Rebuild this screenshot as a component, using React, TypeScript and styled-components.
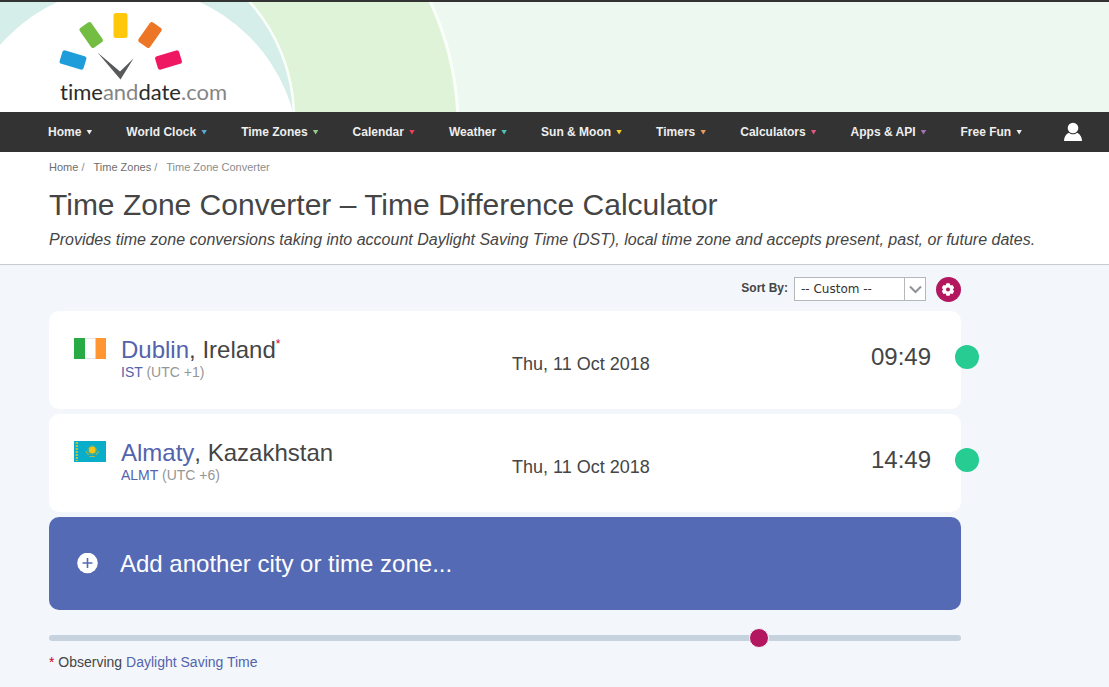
import React from "react";
import styled, { createGlobalStyle } from "styled-components";

const GlobalStyle = createGlobalStyle`
  *, *::before, *::after { box-sizing: border-box; }
  html { min-height: 100%; background: #f3f7fb; }
  body {
    margin: 0;
    font-family: "Liberation Sans", Arial, sans-serif;
    color: #454545;
  }
  a { color: #5363ac; text-decoration: none; }
`;

const Banner = styled.header`
  display: flex;
  height: 112px;
  overflow: hidden;
  border-top: 2px solid #333;
  background: #edf8f0;
`;

const LogoLink = styled.a`
  display: block;
  flex: none;
`;

const Nav = styled.nav`
  display: flex;
  align-items: center;
  height: 40px;
  padding: 0 26px 0 48px;
  background: #333;
`;

const NavList = styled.ul`
  display: flex;
  gap: 34px;
  margin: 0;
  padding: 0;
  list-style: none;
`;

const NavLink = styled.a<{ $arrow: string }>`
  display: flex;
  align-items: center;
  gap: 5px;
  font-size: 12px;
  line-height: 16px;
  font-weight: 700;
  white-space: nowrap;
  color: #eee;

  &::after {
    content: "";
    width: 6px;
    height: 5px;
    background: ${(p) => p.$arrow};
    clip-path: polygon(0 0, 100% 0, 50% 100%);
  }
`;

const UserButton = styled.button`
  display: flex;
  margin: 0 0 0 auto;
  padding: 0;
  border: 0;
  background: none;
`;

const Intro = styled.section`
  padding: 8px 49px 14px;
  border-bottom: 1px solid #c8cacc;
  background: #fff;
`;

const Crumbs = styled.ol`
  display: flex;
  gap: 9px;
  margin: 0;
  padding: 0;
  list-style: none;
  font-size: 11px;
  line-height: 14px;
  color: #8c8c8c;

  a { color: #6e6e6e; }
`;

const Title = styled.h1`
  margin: 13px 0 6px;
  font-size: 30px;
  line-height: 36px;
  font-weight: 400;
`;

const Lead = styled.p`
  margin: 0;
  font-size: 16px;
  line-height: 21px;
  font-style: italic;
`;

const Converter = styled.main`
  max-width: 1010px;
  padding: 12px 49px;
`;

const Tools = styled.div`
  display: flex;
  align-items: flex-start;
  justify-content: flex-end;
  height: 25px;
  margin-bottom: 9px;
`;

const SortLabel = styled.label`
  margin: 3px 6px 0 0;
  font-size: 12px;
  line-height: 16px;
  font-weight: 700;
`;

const SelectBox = styled.div`
  display: grid;
  grid-template-columns: 1fr 21px;
  width: 132px;
  height: 24px;
  margin-right: 10px;
  border: 1px solid #b4b8bb;
  background: #fff;

  select {
    grid-area: 1 / 1 / 2 / 3;
    width: 100%;
    padding: 0 6px;
    border: 0;
    appearance: none;
    background: none;
    font: 12px "DejaVu Sans", Verdana, sans-serif;
    color: #333;
  }

  svg {
    grid-area: 1 / 2;
    width: 21px;
    height: 22px;
    border-left: 1px solid #b4b8bb;
    pointer-events: none;
  }
`;

const GearButton = styled.button`
  display: flex;
  padding: 0;
  border: 0;
  border-radius: 50%;
  background: #b3175f;
`;

const Rows = styled.ul`
  display: grid;
  gap: 5px;
  margin: 0;
  padding: 0;
  list-style: none;
`;

const Row = styled.li`
  position: relative;
  display: grid;
  grid-template-columns: 47px 391px 1fr auto;
  height: 98px;
  padding: 25px 30px 0 25px;
  border-radius: 10px;
  background: #fff;
`;

const Flag = styled.svg`
  width: 32px;
  height: 21px;
  margin-top: 2px;
`;

const City = styled.h2`
  display: flex;
  margin: 0;
  font-size: 24px;
  line-height: 28px;
  font-weight: 400;
  white-space: pre;
`;

const Star = styled.span`
  font-size: 12px;
  line-height: 16px;
  color: #d0021b;
`;

const Zone = styled.p`
  margin: 0;
  font-size: 14px;
  line-height: 16px;
  color: #969696;
`;

const DateText = styled.span`
  margin-top: 17px;
  font-size: 18px;
  line-height: 22px;
`;

const Time = styled.time`
  margin-top: 7px;
  font-size: 24px;
  line-height: 28px;
`;

const Status = styled.span`
  position: absolute;
  top: 34px;
  right: -18px;
  width: 24px;
  height: 24px;
  border-radius: 50%;
  background: #27cc92;
`;

const AddButton = styled.button`
  display: flex;
  align-items: center;
  gap: 21px;
  width: 100%;
  height: 93px;
  margin: 5px 0 17px;
  padding: 0 28px;
  border: 0;
  border-radius: 10px;
  background: #556ab4;
  font: 24px/28px "Liberation Sans", Arial, sans-serif;
  color: #fff;
`;

const TimeSlider = styled.input`
  display: block;
  width: 100%;
  height: 22px;
  margin: 0;
  appearance: none;
  background: none;

  &::-webkit-slider-runnable-track {
    height: 6px;
    border-radius: 3px;
    background: #c6d2de;
  }
  &::-webkit-slider-thumb {
    width: 20px;
    height: 20px;
    margin-top: -7px;
    appearance: none;
    border: 1px solid #f3f7fb;
    border-radius: 50%;
    background: #b3175f;
  }
`;

const Note = styled.p`
  margin: 4px 0 0;
  font-size: 14px;
  line-height: 18px;

  span { color: #d0021b; }
`;

const menu = [
  ["Home", "#eee"],
  ["World Clock", "#5ba9d6"],
  ["Time Zones", "#8fce86"],
  ["Calendar", "#ee3d56"],
  ["Weather", "#4fc3b5"],
  ["Sun & Moon", "#f8d12f"],
  ["Timers", "#ee9a58"],
  ["Calculators", "#e0567c"],
  ["Apps & API", "#a971bd"],
  ["Free Fun", "#eee"],
];

const IrishFlag = () => (
  <Flag viewBox="0 0 32 21" aria-hidden="true">
    <path fill="#fff" stroke="#e4e4e4" d="M.5.5h31v20H.5z" />
    <path fill="#28ab45" d="M0 0h11v21H0z" />
    <path fill="#ff9632" d="M21.500 0H32v21H21.500z" />
  </Flag>
);

const KazakhFlag = () => (
  <Flag viewBox="0 0 32 21" aria-hidden="true">
    <path fill="#08aec9" d="M0 0h32v21H0z" />
    <path stroke="#b9c443" strokeWidth="2.200" strokeDasharray="2 1" d="M2.800 1v19" />
    <circle cx="18.300" cy="9" r="3.400" fill="#f5c414" />
    <circle cx="18.300" cy="9" r="4.300" fill="none" stroke="#a5b94d" strokeDasharray="1 1" />
    <path
      fill="none"
      stroke="#a9b84e"
      strokeWidth="1.200"
      d="M12 10c.5 2.500 1.500 3 2.800 3.600M24.600 10c-.5 2.500-1.500 3-2.800 3.600M15.500 15.500h5.600"
    />
  </Flag>
);

const places = [
  { city: "Dublin", country: "Ireland", dst: true, zone: "IST", offset: "(UTC +1)", time: "09:49", flag: <IrishFlag /> },
  { city: "Almaty", country: "Kazakhstan", dst: false, zone: "ALMT", offset: "(UTC +6)", time: "14:49", flag: <KazakhFlag /> },
];

const LogoText = styled.text`
  font: 22px Lato, sans-serif;
  font-variant-ligatures: none;
  fill: #2b2b2b;

  tspan { fill: #858585; }
`;

const Logo = () => (
  <svg width="480" height="110" viewBox="0 2 480 110" role="img" aria-label="timeanddate.com">
    <circle cx="161" cy="127" r="297" fill="#def3d8" stroke="#fafffa" strokeWidth="3" />
    <circle cx="120" cy="118" r="174" fill="#d6eee9" stroke="#fafffa" strokeWidth="2.500" />
    <path fill="#d6eee9" d="M0 0h60v112H0z" />
    <circle cx="128.500" cy="157" r="170.500" fill="#fff" />
    <rect x="-12.500" y="-7" width="25" height="14" rx="2.500" fill="#1f9ddb" transform="translate(73 60) rotate(17)" />
    <rect x="-12" y="-7" width="24" height="14" rx="2.500" fill="#73bd43" transform="translate(91.200 35) rotate(55)" />
    <rect x="113.500" y="13" width="14" height="25" rx="2.500" fill="#ffc80a" />
    <rect x="-12" y="-7" width="24" height="14" rx="2.500" fill="#ec7625" transform="translate(150 35) rotate(-55)" />
    <rect x="-12.500" y="-7" width="25" height="14" rx="2.500" fill="#ef1762" transform="translate(168.500 60) rotate(-17)" />
    <path fill="#58595b" d="M97.500 52.500 120 71.500 133.500 58.500 120.500 79.500z" />
    <LogoText x="60" y="100">
      time<tspan>and</tspan>date<tspan>.com</tspan>
    </LogoText>
  </svg>
);

export default function App() {
  return (
    <>
      <GlobalStyle />
      <Banner>
        <LogoLink href="#">
          <Logo />
        </LogoLink>
      </Banner>
      <Nav>
        <NavList>
          {menu.map(([label, arrow]) => (
            <li key={label}>
              <NavLink href="#" $arrow={arrow}>{label}</NavLink>
            </li>
          ))}
        </NavList>
        <UserButton aria-label="My account">
          <svg width="20" height="20" viewBox="0 0 20 20" fill="#fff">
            <circle cx="10" cy="6" r="5.300" />
            <path d="M1 19c0-4 1.800-7 5-8.300 2.300 2 5.700 2 8 0 3.200 1.300 5 4.300 5 8.300z" />
          </svg>
        </UserButton>
      </Nav>
      <Intro>
        <Crumbs>
          <li><a href="#">Home</a> /</li>
          <li><a href="#">Time Zones</a> /</li>
          <li>Time Zone Converter</li>
        </Crumbs>
        <Title>Time Zone Converter – Time Difference Calculator</Title>
        <Lead>
          Provides time zone conversions taking into account Daylight Saving Time (DST), local time zone and
          accepts present, past, or future dates.
        </Lead>
      </Intro>
      <Converter>
        <Tools>
          <SortLabel htmlFor="sort">Sort By:</SortLabel>
          <SelectBox>
            <select id="sort">
              <option>-- Custom --</option>
            </select>
            <svg viewBox="0 0 20 22" fill="none" stroke="#8e9296" strokeWidth="2">
              <path d="M5 8.500l5.500 5.500L16 8.500" />
            </svg>
          </SelectBox>
          <GearButton aria-label="Settings">
            <svg width="25" height="25" viewBox="0 0 25 25">
              <g fill="#fff">
                <circle cx="12" cy="12.500" r="5" />
                {[0, 60, 120].map((turn) => (
                  <rect key={turn} x="10" y="6.300" width="4" height="12.400" rx="1" transform={`rotate(${turn} 12 12.500)`} />
                ))}
              </g>
              <circle cx="12" cy="12.500" r="2" fill="#b3175f" />
            </svg>
          </GearButton>
        </Tools>
        <Rows>
          {places.map((p) => (
            <Row key={p.city}>
              {p.flag}
              <div>
                <City>
                  <a href="#">{p.city}</a>, {p.country}
                  {p.dst && <Star>*</Star>}
                </City>
                <Zone><a href="#">{p.zone}</a> {p.offset}</Zone>
              </div>
              <DateText>Thu, 11 Oct 2018</DateText>
              <Time>{p.time}</Time>
              <Status />
            </Row>
          ))}
        </Rows>
        <AddButton>
          <svg width="22" height="22" viewBox="0 0 22 22">
            <circle cx="10.500" cy="10" r="10.300" fill="#fff" />
            <path stroke="#556ab4" strokeWidth="1.600" d="M10.500 5v10M5.500 10h10" />
          </svg>
          Add another city or time zone...
        </AddButton>
        <TimeSlider type="range" min={0} max={1440} defaultValue={1130} aria-label="Time of day" />
        <Note><span>*</span> Observing <a href="#">Daylight Saving Time</a></Note>
      </Converter>
    </>
  );
}
